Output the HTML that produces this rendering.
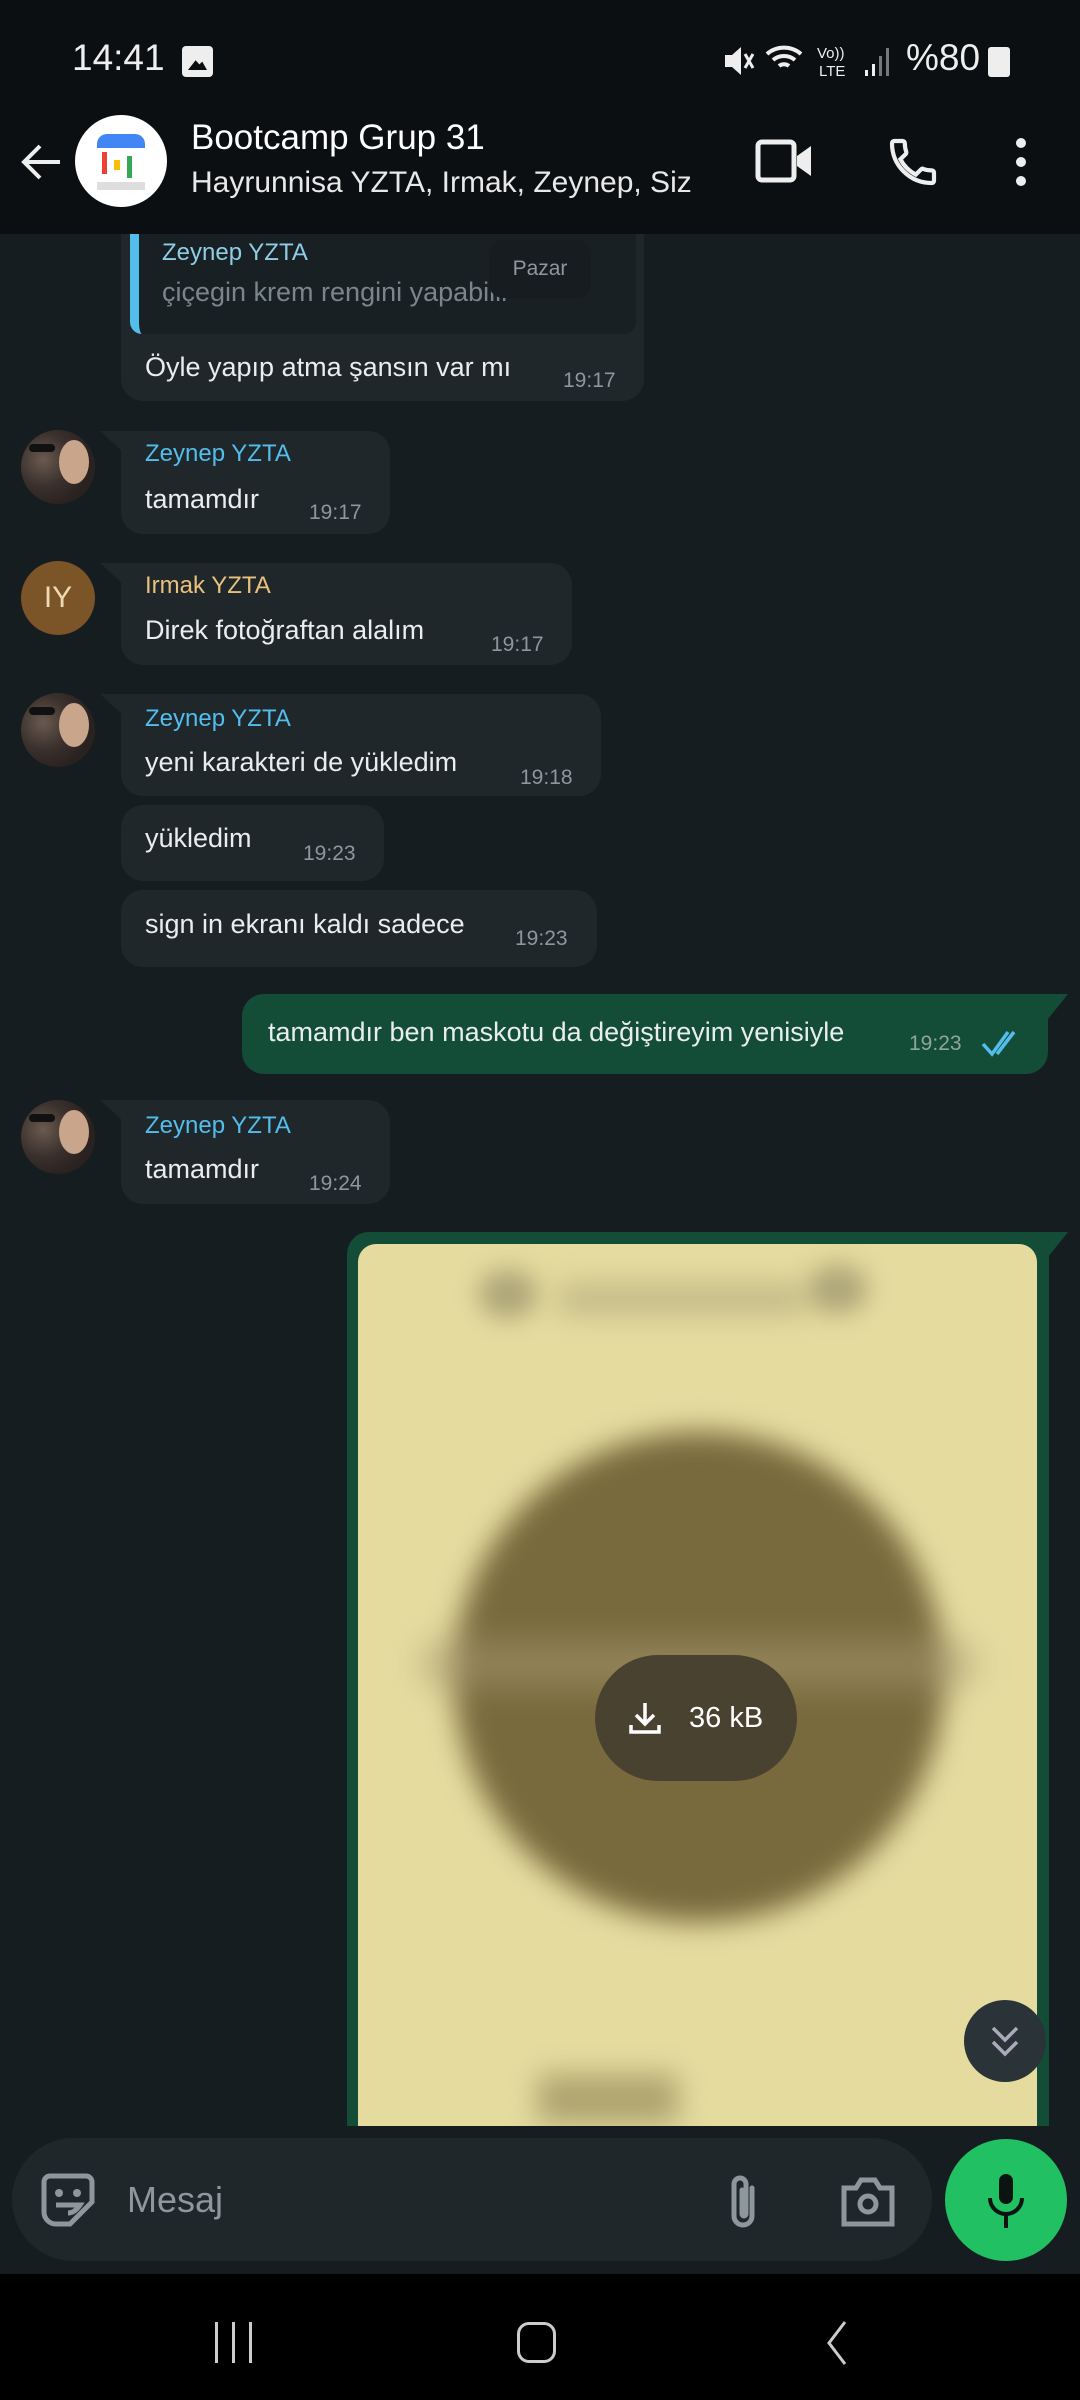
<!DOCTYPE html>
<html><head><meta charset="utf-8"><style>
*{margin:0;padding:0;box-sizing:border-box}
body{width:1080px;height:2400px;background:#161d20;position:relative;overflow:hidden;font-family:"Liberation Sans",sans-serif;color:#e9edef}
.a{position:absolute}
.t{position:absolute;white-space:nowrap;line-height:40px;height:40px}
.msg{font-size:27px}
.time{font-size:21px;color:#8d979c}
.name{font-size:24px}
.in{background:#1f272a;border-radius:22px}
.av{position:absolute;width:74px;height:74px;border-radius:50%;left:21px;overflow:hidden;background:radial-gradient(circle at 30% 40%,#6a5a50 0,#3a302c 40%,#2a2220 70%)}
.av:after{content:"";position:absolute;left:38px;top:10px;width:30px;height:44px;border-radius:50%;background:#c9a58c}
.av:before{content:"";position:absolute;left:8px;top:14px;width:26px;height:8px;border-radius:4px;background:#111}
</style></head><body>

<!-- msg 1 -->
<div class="a in" style="left:121px;top:205px;width:523px;height:196px;border-radius:0 0 22px 22px"></div>
<div class="a" style="left:130px;top:205px;width:506px;height:129px;background:#182023;border-radius:0 0 12px 12px;border-left:9px solid #53bdeb"></div>
<div class="t name" style="left:162px;top:233px;color:#8fcde6">Zeynep YZTA</div>
<div class="t msg" style="left:162px;top:272px;color:#7b868b">çiçegin krem rengini yapabilir</div>
<div class="a" style="left:489px;top:240px;width:102px;height:58px;background:#161c1f;border-radius:14px"></div>
<div class="t" style="left:490px;top:249px;width:100px;text-align:center;font-size:21px;color:#8d979c">Pazar</div>
<div class="t msg" style="left:145px;top:347px">Öyle yapıp atma şansın var mı</div>
<div class="t time" style="left:563px;top:361px">19:17</div>

<!-- msg 2 -->
<div class="av" style="top:430px"></div>
<div class="a in" style="left:121px;top:431px;width:269px;height:103px;border-top-left-radius:0"></div>
<div class="a" style="left:100px;top:431px;width:24px;height:22px;background:#1f272a;clip-path:polygon(0 0,100% 0,100% 100%)"></div>
<div class="t name" style="left:145px;top:434px;color:#53bdeb">Zeynep YZTA</div>
<div class="t msg" style="left:145px;top:479px">tamamdır</div>
<div class="t time" style="left:309px;top:493px">19:17</div>

<!-- msg 3 -->
<div class="a" style="left:21px;top:561px;width:74px;height:74px;border-radius:50%;background:#7b5428;color:#f0d9b5;font-size:30px;line-height:74px;text-align:center">IY</div>
<div class="a in" style="left:121px;top:563px;width:451px;height:102px;border-top-left-radius:0"></div>
<div class="a" style="left:100px;top:563px;width:24px;height:22px;background:#1f272a;clip-path:polygon(0 0,100% 0,100% 100%)"></div>
<div class="t name" style="left:145px;top:566px;color:#e9c07d">Irmak YZTA</div>
<div class="t msg" style="left:145px;top:610px">Direk fotoğraftan alalım</div>
<div class="t time" style="left:491px;top:625px">19:17</div>

<!-- msg 4 -->
<div class="av" style="top:693px"></div>
<div class="a in" style="left:121px;top:694px;width:480px;height:102px;border-top-left-radius:0"></div>
<div class="a" style="left:100px;top:694px;width:24px;height:22px;background:#1f272a;clip-path:polygon(0 0,100% 0,100% 100%)"></div>
<div class="t name" style="left:145px;top:699px;color:#53bdeb">Zeynep YZTA</div>
<div class="t msg" style="left:145px;top:742px">yeni karakteri de yükledim</div>
<div class="t time" style="left:520px;top:758px">19:18</div>

<div class="a in" style="left:121px;top:805px;width:263px;height:76px"></div>
<div class="t msg" style="left:145px;top:818px">yükledim</div>
<div class="t time" style="left:303px;top:834px">19:23</div>

<div class="a in" style="left:121px;top:890px;width:476px;height:77px"></div>
<div class="t msg" style="left:145px;top:904px">sign in ekranı kaldı sadece</div>
<div class="t time" style="left:515px;top:919px">19:23</div>

<!-- outgoing -->
<div class="a" style="left:242px;top:994px;width:806px;height:80px;background:#134d37;border-radius:22px;border-top-right-radius:0"></div>
<div class="a" style="left:1044px;top:994px;width:24px;height:30px;background:#134d37;clip-path:polygon(0 0,100% 0,0 100%)"></div>
<div class="t msg" style="left:268px;top:1012px">tamamdır ben maskotu da değiştireyim yenisiyle</div>
<div class="t time" style="left:909px;top:1024px;color:#8fa59b">19:23</div>
<svg class="a" style="left:980px;top:1028px" width="46" height="30" viewBox="0 0 46 30"><path d="M3 16l9 10L28 4M17 26L34 4" stroke="#53bdeb" stroke-width="3.5" fill="none"/></svg>

<!-- msg 8 -->
<div class="av" style="top:1100px"></div>
<div class="a in" style="left:121px;top:1100px;width:269px;height:104px;border-top-left-radius:0"></div>
<div class="a" style="left:100px;top:1100px;width:24px;height:22px;background:#1f272a;clip-path:polygon(0 0,100% 0,100% 100%)"></div>
<div class="t name" style="left:145px;top:1106px;color:#53bdeb">Zeynep YZTA</div>
<div class="t msg" style="left:145px;top:1149px">tamamdır</div>
<div class="t time" style="left:309px;top:1164px">19:24</div>

<!-- image bubble -->
<div class="a" style="left:347px;top:1232px;width:702px;height:900px;background:#134d37;border-radius:22px 0 0 0"></div>
<div class="a" style="left:1044px;top:1232px;width:24px;height:30px;background:#134d37;clip-path:polygon(0 0,100% 0,0 100%)"></div>
<div class="a" style="left:358px;top:1244px;width:679px;height:882px;background:#e5db9f;border-radius:18px 18px 0 0;overflow:hidden">
 <div class="a" style="left:120px;top:25px;width:60px;height:50px;border-radius:50%;background:#8c8460;filter:blur(12px);opacity:.6"></div>
 <div class="a" style="left:200px;top:40px;width:250px;height:30px;background:#a09870;filter:blur(14px);opacity:.5"></div>
 <div class="a" style="left:450px;top:20px;width:60px;height:50px;border-radius:50%;background:#8c8460;filter:blur(12px);opacity:.6"></div>
 <div class="a" style="left:96px;top:188px;width:490px;height:490px;border-radius:50%;background:#786a3c;filter:blur(14px)"></div>
 <div class="a" style="left:60px;top:395px;width:560px;height:50px;border-radius:25px;background:#a89a72;filter:blur(16px);opacity:.5"></div>
 <div class="a" style="left:180px;top:830px;width:140px;height:50px;background:#8a7f50;filter:blur(14px);opacity:.6"></div>
</div>
<div class="a" style="left:595px;top:1655px;width:202px;height:126px;border-radius:63px;background:#4a4230"></div>
<svg class="a" style="left:627px;top:1700px" width="36" height="36" viewBox="0 0 36 36"><path d="M18 3v20M9 15l9 9 9-9M4 25v7h28v-7" stroke="#fff" stroke-width="3.5" fill="none"/></svg>
<div class="t" style="left:689px;top:1698px;font-size:29px;color:#fff">36 kB</div>
<div class="a" style="left:964px;top:2000px;width:82px;height:82px;border-radius:50%;background:#2a3338"></div>
<svg class="a" style="left:987px;top:2022px" width="36" height="38" viewBox="0 0 36 38"><path d="M6 6l12 12 12-12M6 20l12 12 12-12" stroke="#aab" stroke-width="3.5" fill="none"/></svg>

<!-- header (on top) -->
<div class="a" style="left:0;top:0;width:1080px;height:234px;background:#0b0f12"></div>
<div class="t" style="left:72px;top:38px;font-size:37px;color:#eee">14:41</div>
<div class="a" style="left:182px;top:46px;width:31px;height:31px;border-radius:4px;background:#eee"></div>
<div class="a" style="left:188px;top:56px;width:19px;height:14px;background:#0b0f12;clip-path:polygon(0 100%,40% 30%,60% 60%,75% 40%,100% 100%)"></div>
<svg class="a" style="left:723px;top:44px" width="32" height="34" viewBox="0 0 32 34"><path d="M2 11h7l9-8v28l-9-8H2z" fill="#eee"/><path d="M22 10l8 14M30 10l-8 14" stroke="#eee" stroke-width="3"/></svg>
<svg class="a" style="left:765px;top:40px" width="150" height="40" viewBox="0 0 150 40"><path d="M2 14a26 26 0 0 1 34 0M8 20a17 17 0 0 1 22 0M14 26a8 8 0 0 1 10 0" stroke="#eee" stroke-width="4" fill="none"/><text x="52" y="18" font-size="15" fill="#eee" font-family="Liberation Sans">Vo))</text><text x="54" y="36" font-size="15" fill="#eee" font-family="Liberation Sans">LTE</text><rect x="100" y="30" width="3" height="6" fill="#eee"/><rect x="107" y="24" width="3" height="12" fill="#eee"/><rect x="114" y="16" width="3" height="20" fill="#777"/><rect x="121" y="8" width="3" height="28" fill="#777"/></svg>
<div class="t" style="left:906px;top:38px;font-size:37px;color:#eee">%80</div>
<div class="a" style="left:988px;top:47px;width:22px;height:30px;border-radius:3px;background:#eee"></div>
<svg class="a" style="left:20px;top:140px" width="44" height="44" viewBox="0 0 44 44"><path d="M40 22H5M20 6L4 22l16 16" stroke="#eee" stroke-width="4" fill="none"/></svg>
<div class="a" style="left:75px;top:115px;width:92px;height:92px;border-radius:50%;background:#fff"></div>
<div class="a" style="left:97px;top:134px;width:48px;height:14px;background:#4285f4;border-radius:10px 10px 0 0"></div>
<div class="a" style="left:102px;top:152px;width:5px;height:22px;background:#ea4335"></div>
<div class="a" style="left:114px;top:160px;width:6px;height:10px;background:#fbbc04"></div>
<div class="a" style="left:127px;top:156px;width:5px;height:22px;background:#34a853"></div>
<div class="a" style="left:97px;top:182px;width:48px;height:8px;background:#ddd"></div>
<div class="t" style="left:191px;top:118px;font-size:35px;color:#fff">Bootcamp Grup 31</div>
<div class="t" style="left:191px;top:163px;font-size:30px;color:#e8e8e8">Hayrunnisa YZTA, Irmak, Zeynep, Siz</div>
<svg class="a" style="left:755px;top:138px" width="60" height="46" viewBox="0 0 60 46"><rect x="3" y="4" width="36" height="38" rx="4" stroke="#eee" stroke-width="5" fill="none"/><path d="M42 18l14-10v30l-14-10z" fill="#eee"/></svg>
<svg class="a" style="left:885px;top:134px" width="56" height="56" viewBox="0 0 24 24"><path d="M6.6 10.8c1.4 2.8 3.8 5.1 6.6 6.6l2.2-2.2c.3-.3.7-.4 1-.2 1.1.4 2.3.6 3.6.6.6 0 1 .4 1 1V20c0 .6-.4 1-1 1C10.6 21 3 13.4 3 4c0-.6.4-1 1-1h3.5c.6 0 1 .4 1 1 0 1.3.2 2.5.6 3.6.1.3 0 .7-.2 1z" stroke="#eee" stroke-width="1.8" fill="none"/></svg>
<div class="a" style="left:1016px;top:138px;width:10px;height:10px;border-radius:50%;background:#eee;box-shadow:0 19px 0 #eee,0 38px 0 #eee"></div>

<!-- input -->
<div class="a" style="left:0;top:2126px;width:1080px;height:148px;background:#161d20"></div>
<div class="a" style="left:12px;top:2138px;width:920px;height:123px;border-radius:62px;background:#1f272a"></div>
<svg class="a" style="left:40px;top:2172px" width="56" height="56" viewBox="0 0 56 56"><path d="M10 4h36a6 6 0 0 1 6 6v20L30 52H16A12 12 0 0 1 4 40V10a6 6 0 0 1 6-6z" stroke="#8d979c" stroke-width="5" fill="none"/><circle cx="19" cy="21" r="4" fill="#8d979c"/><circle cx="37" cy="21" r="4" fill="#8d979c"/><path d="M16 33h24c-4 6-8 8-12 8" stroke="#8d979c" stroke-width="5" fill="none"/></svg>
<div class="t" style="left:127px;top:2178px;font-size:36px;line-height:44px;height:44px;color:#8d979c">Mesaj</div>
<svg class="a" style="left:722px;top:2172px" width="44" height="60" viewBox="0 0 44 60"><path d="M30 16v28a9 9 0 0 1-18 0V12a6 6 0 0 1 12 0v30a2 2 0 0 1-4 0V18" stroke="#8d979c" stroke-width="5" fill="none" stroke-linecap="round"/></svg>
<svg class="a" style="left:840px;top:2176px" width="56" height="52" viewBox="0 0 56 52"><path d="M4 12h12l5-8h14l5 8h12v36H4z" stroke="#8d979c" stroke-width="5" fill="none"/><circle cx="28" cy="28" r="8" stroke="#8d979c" stroke-width="5" fill="none"/></svg>
<div class="a" style="left:945px;top:2139px;width:122px;height:122px;border-radius:50%;background:#21c063"></div>
<svg class="a" style="left:982px;top:2172px" width="48" height="60" viewBox="0 0 48 60"><rect x="17" y="2" width="14" height="30" rx="7" fill="#0b1410"/><path d="M8 26a16 16 0 0 0 32 0M24 42v14" stroke="#0b1410" stroke-width="4" fill="none"/></svg>

<!-- nav -->
<div class="a" style="left:0;top:2274px;width:1080px;height:126px;background:#000"></div>
<div class="a" style="left:215px;top:2322px;width:3px;height:41px;background:#ccc;box-shadow:17px 0 0 #ccc,34px 0 0 #ccc"></div>
<div class="a" style="left:517px;top:2322px;width:39px;height:41px;border:3px solid #ccc;border-radius:12px"></div>
<svg class="a" style="left:823px;top:2320px" width="26" height="46" viewBox="0 0 26 46"><path d="M22 2L6 23l16 21" stroke="#ccc" stroke-width="3" fill="none"/></svg>
</body></html>
